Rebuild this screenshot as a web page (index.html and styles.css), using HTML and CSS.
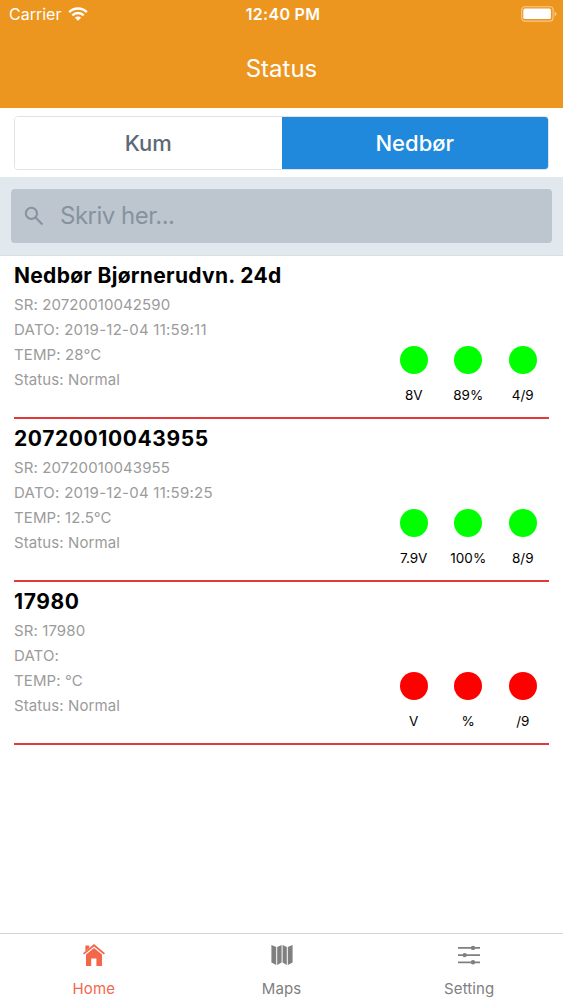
FILE: index.html
```html
<!DOCTYPE html>
<html lang="no">
<head>
    <meta charset="UTF-8">
    <meta name="viewport" content="width=device-width, initial-scale=1.0">
    <title>Status</title>
    <link rel="stylesheet" href="styles.css">
</head>
<body>
    <header>
        <div class="status-bar">
            <div class="carrier">
                <span>Carrier</span>
                <svg class="wifi" width="20" height="14" viewBox="0 0 20 14" fill="none" stroke="#fff" stroke-width="2.4">
                    <path d="M1.2 5.1a12.6 12.6 0 0 1 17.6 0"/>
                    <path d="M4.3 8.3a8.2 8.2 0 0 1 11.4 0"/>
                    <path d="M10 13.8L6.9 10.7a4.4 4.4 0 0 1 6.2 0z" fill="#fff" stroke="none"/>
                </svg>
            </div>
            <span class="time">12:40 PM</span>
            <div class="battery-wrap">
                <svg width="36" height="16" viewBox="0 0 36 16">
                    <rect x="0.7" y="0.7" width="31.4" height="14.4" rx="3" fill="none" stroke="#fff" stroke-opacity="0.5" stroke-width="1.1"/>
                    <rect x="2.3" y="2.5" width="27.6" height="10.4" rx="1.5" fill="#fff"/>
                    <path d="M33.6 5.5a2.6 2.6 0 0 1 0 5z" fill="#fff" fill-opacity="0.5"/>
                </svg>
            </div>
        </div>
        <h1>Status</h1>
    </header>

    <div class="segment">
        <button class="segment-button">Kum</button>
        <button class="segment-button active">Nedbør</button>
    </div>

    <div class="search-bar">
        <div class="search-box">
            <svg width="20" height="20" viewBox="0 0 20 20" fill="none" stroke="#86939e" stroke-width="2.1">
                <circle cx="7.4" cy="7.4" r="5.6"/>
                <path d="M11.6 11.6L18.4 18.4"/>
            </svg>
            <input type="text" placeholder="Skriv her...">
        </div>
    </div>

    <main>
        <div class="item">
            <div class="item-info">
                <h2>Nedbør Bjørnerudvn. 24d</h2>
                <p>SR: 20720010042590</p>
                <p class="date">DATO: 2019-12-04 11:59:11</p>
                <p>TEMP: 28°C</p>
                <p>Status: Normal</p>
            </div>
            <div class="item-levels">
                <div class="level"><span class="dot green"></span>8V</div>
                <div class="level"><span class="dot green"></span>89%</div>
                <div class="level"><span class="dot green"></span>4/9</div>
            </div>
        </div>
        <div class="item">
            <div class="item-info">
                <h2 class="serial">20720010043955</h2>
                <p>SR: 20720010043955</p>
                <p class="date">DATO: 2019-12-04 11:59:25</p>
                <p>TEMP: 12.5°C</p>
                <p>Status: Normal</p>
            </div>
            <div class="item-levels">
                <div class="level"><span class="dot green"></span>7.9V</div>
                <div class="level"><span class="dot green"></span>100%</div>
                <div class="level"><span class="dot green"></span>8/9</div>
            </div>
        </div>
        <div class="item">
            <div class="item-info">
                <h2 class="serial">17980</h2>
                <p>SR: 17980</p>
                <p>DATO:</p>
                <p>TEMP: °C</p>
                <p>Status: Normal</p>
            </div>
            <div class="item-levels">
                <div class="level"><span class="dot red"></span>V</div>
                <div class="level"><span class="dot red"></span>%</div>
                <div class="level"><span class="dot red"></span>/9</div>
            </div>
        </div>
    </main>

    <nav class="tabs">
        <a href="#" class="tab active">
            <svg width="24" height="24" viewBox="0 0 24 24" fill="currentColor">
                <path d="M3.4 2.5h3.8v2.6L3.4 8.2z"/>
                <path d="M12 1L1 10.3l1.2 1.3L12 3.6l9.8 8 1.2-1.3z"/>
                <path d="M12 5L4 11.6V23h5.2v-7.4h5.2V23H20V11.6z"/>
            </svg>
            <span>Home</span>
        </a>
        <a href="#" class="tab">
            <svg width="24" height="24" viewBox="0 0 24 24" fill="currentColor">
                <path d="M1.4 2l4.8 2v18l-4.8-2.6z"/>
                <path d="M11.6 2L7.2 4v18l4.4-2.6z"/>
                <path d="M12.6 2l4.2 2v18l-4.2-2.6z"/>
                <path d="M22.6 2l-4.8 2v18l4.8-2.6z"/>
            </svg>
            <span>Maps</span>
        </a>
        <a href="#" class="tab">
            <svg width="24" height="24" viewBox="0 0 24 24" fill="currentColor">
                <path d="M1 4h22v1.8H1zM1 11.2h22v1.8H1zM1 18.4h22v1.8H1z"/>
                <circle cx="16" cy="4.9" r="2.2"/>
                <circle cx="7.7" cy="12.1" r="2.2"/>
                <circle cx="16" cy="19.3" r="2.2"/>
            </svg>
            <span>Setting</span>
        </a>
    </nav>
</body>
</html>
```
FILE: styles.css
```css
* {
    box-sizing: border-box;
}

body {
    font-family: Inter, "Liberation Sans", sans-serif;
    margin: 0;
    height: 1000px;
    background-color: #fff;
    color: #000;
    display: flex;
    flex-direction: column;
    overflow: hidden;
}

header {
    height: 108px;
    background: #ed961f;
    color: #fff;
}

.status-bar {
    display: grid;
    grid-template-columns: 1fr auto 1fr;
    align-items: center;
    height: 28px;
    padding: 0 6px 0 9px;
    font-size: 16px;
}

.carrier {
    display: flex;
    align-items: center;
    gap: 7px;
}

.time {
    font-weight: 600;
    font-size: 16px;
    letter-spacing: 0.3px;
}

.battery-wrap {
    display: flex;
    justify-content: flex-end;
}

h1 {
    margin: 0;
    line-height: 82px;
    text-align: center;
    font-size: 24px;
    font-weight: 400;
}

.segment {
    display: flex;
    height: 54px;
    margin: 8px 14px 7px;
    border: 1px solid #dfe3e7;
    border-radius: 4px;
    overflow: hidden;
}

.segment-button {
    flex: 1;
    padding: 0;
    border: none;
    background: #fff;
    color: #5e6977;
    font-family: inherit;
    font-size: 22px;
    font-weight: 450;
}

.segment-button.active {
    background: #2089dc;
    color: #fff;
}

.search-bar {
    height: 79px;
    padding: 12px 11px;
    background: #e1e8ee;
    border-bottom: 1px solid #d9dee2;
}

.search-box {
    display: flex;
    align-items: center;
    height: 54px;
    padding-left: 13px;
    gap: 16px;
    background: #bdc6cf;
    border-radius: 4px;
}

.search-box input {
    flex: 1;
    padding: 0 0 1px;
    border: none;
    outline: none;
    background: transparent;
    font-family: inherit;
    font-size: 24px;
    letter-spacing: -0.5px;
}

.search-box input::placeholder {
    color: #86939e;
    opacity: 1;
}

main {
    flex-grow: 1;
    padding: 0 14px;
}

.item {
    display: flex;
    justify-content: space-between;
    align-items: flex-end;
    height: 163px;
    border-bottom: 2px solid #e03a3a;
}

.item-info {
    align-self: flex-start;
    padding-top: 5px;
}

h2 {
    margin: 0 0 1px;
    font-size: 21px;
    font-weight: 700;
    line-height: 30px;
    letter-spacing: 0.3px;
}

.serial {
    letter-spacing: 0.6px;
}

.item-info p {
    margin: 0;
    font-size: 15px;
    line-height: 25px;
    letter-spacing: 0.1px;
    color: #9b9b9b;
}

.item-info .date {
    letter-spacing: 0.25px;
}

.item-levels {
    display: flex;
    margin-right: -1px;
    padding-bottom: 12px;
}

.level {
    display: flex;
    flex-direction: column;
    align-items: center;
    width: 54.5px;
    font-size: 13.5px;
    line-height: 20px;
}

.dot {
    width: 28px;
    height: 28px;
    margin-bottom: 11px;
    border-radius: 50%;
}

.green {
    background: #00ff00;
}

.red {
    background: #ff0000;
}

.tabs {
    display: flex;
    height: 67px;
    border-top: 1px solid #d4d4d4;
}

.tab {
    flex: 1;
    display: flex;
    flex-direction: column;
    align-items: center;
    padding-top: 9px;
    gap: 12px;
    color: #808080;
    font-size: 15px;
    line-height: 20px;
    letter-spacing: 0.1px;
    text-decoration: none;
}

.tab.active {
    color: #f4664a;
}
```
